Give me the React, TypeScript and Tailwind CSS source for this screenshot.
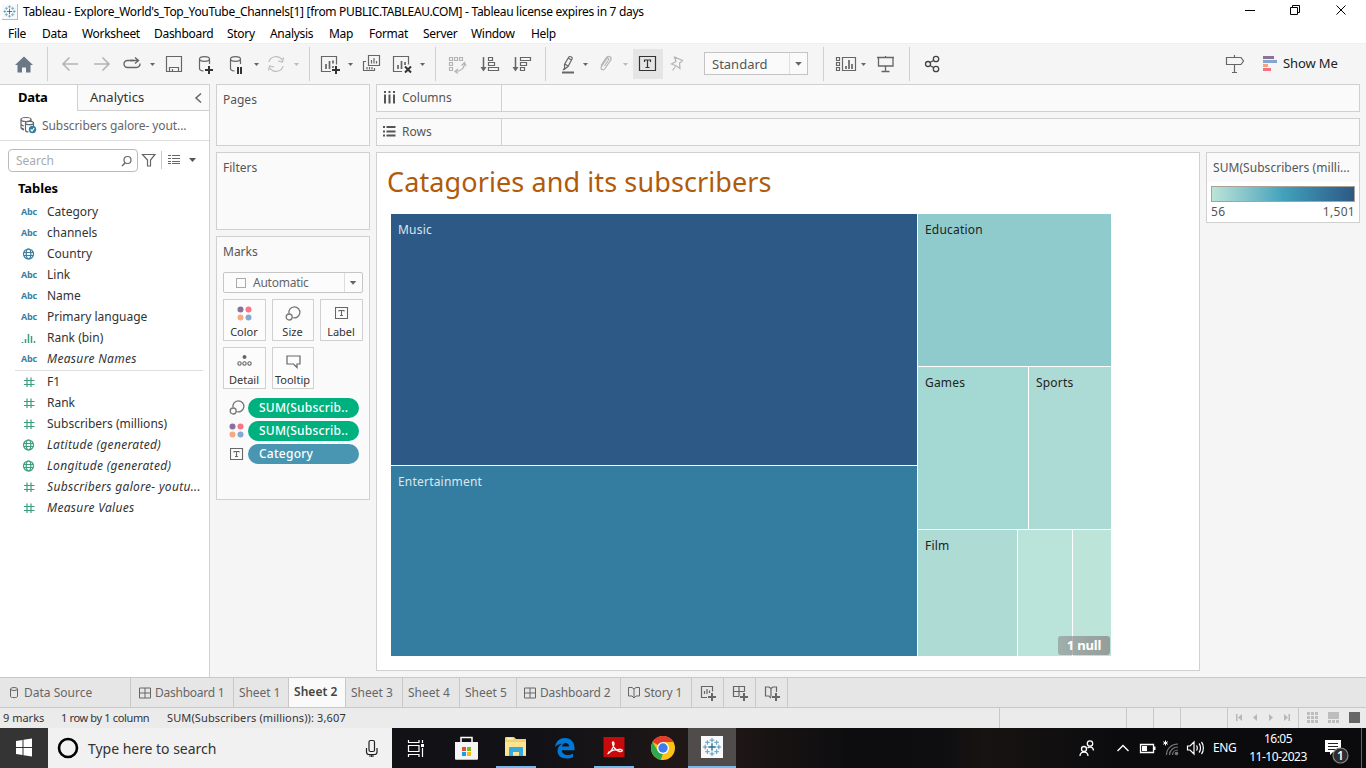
import type { ReactNode } from "react";

const UI = "font-['Noto_Sans','Open_Sans',sans-serif]";

/* Drawing area whose user units are window pixels, starting at (x, y). */
function Glyph({ x, y, w, h, className = "", children }: { x: number; y: number; w: number; h: number; className?: string; children: ReactNode }) {
  return (
    <svg width={w} height={h} viewBox={`${x} ${y} ${w} ${h}`} fill="none" stroke="#666" strokeWidth="1.2" className={`shrink-0 ${className}`}>
      {children}
    </svg>
  );
}

const Caret = ({ x, y = 63, c = "#666" }: { x: number; y?: number; c?: string }) => (
  <path d={`M${x - 2.5} ${y}h5l-2.5 3z`} fill={c} stroke="none" />
);
const Plus = ({ x, y }: { x: number; y: number }) => <path d={`M${x - 4} ${y}h8M${x} ${y - 4}v8`} stroke="#333" strokeWidth="2" />;
const Sep = () => <div className="mb-[3px] mt-[3px] w-px shrink-0 bg-[#d0d0d0]" />;

/* Tableau mark: a large centre cross, and eight smaller ones round it. */
function Mark({ size, className = "" }: { size: number; className?: string }) {
  return (
    <svg width={size} height={size} viewBox="0 0 24 24" fill="none" className={`shrink-0 ${className}`}>
      <rect width="24" height="24" fill="#f7f9fa" />
      <path d="M12 8v8M8 12h8" stroke="#1f6f96" strokeWidth="1.4" />
      <path d="M12 2v5M9.5 4.5h5M12 17v5M9.5 19.500h5M2 12h5M4.500 9.500v5M17 12h5M19.500 9.500v5" stroke="#4b8fae" strokeWidth="1" />
      <path d="M7 4.500v5M4.500 7h5M17 4.500v5M14.500 7h5M7 14.500v5M4.500 17h5M17 14.500v5M14.500 17h5" stroke="#78a8c4" strokeWidth="1.300" />
    </svg>
  );
}

const menu: [string, string][] = [
  ["File", "w-[34px]"], ["Data", "w-10"], ["Worksheet", "w-[72px]"], ["Dashboard", "w-[73px]"], ["Story", "w-[43px]"],
  ["Analysis", "w-[59px]"], ["Map", "w-10"], ["Format", "w-[54px]"], ["Server", "w-12"], ["Window", "w-[60px]"], ["Help", "w-10"],
];

function TitleBar() {
  return (
    <header className="h-[43px] shrink-0 bg-white text-xs text-black">
      <div className="flex h-6 items-center">
        <Mark size={16} className="ml-[2px] border-b border-r border-[#bbb]" />
        <span className="ml-[5px] whitespace-nowrap tracking-[-0.295px]">
          Tableau - Explore_World's_Top_YouTube_Channels[1] [from PUBLIC.TABLEAU.COM] - Tableau license expires in 7 days
        </span>
        <Glyph x={1230} y={0} w={136} h={24} className="ml-auto">
          <g stroke="#000" strokeWidth="1">
            <path d="M1245 10.500h10" />
            <path d="M1290.500 7.500h7v7h-7zM1292.500 7.500v-2h7v7h-2" />
            <path d="M1336.500 5.500l9 9M1345.500 5.500l-9 9" />
          </g>
        </Glyph>
      </div>
      <nav className="flex h-[19px] items-center pl-2">
        {menu.map(([t, w]) => <span key={t} className={`${w} whitespace-nowrap tracking-[-0.3px]`}>{t}</span>)}
      </nav>
    </header>
  );
}

function Toolbar() {
  return (
    <div className="flex h-[41px] shrink-0 border-t border-[#efefef] bg-[#f5f5f5]">
      <Glyph x={0} y={44} w={47} h={40}><path d="M24 56.500l9 8.500h-2.500v7.500h-4.500v-5h-4v5h-4.500v-7.500H15z" fill="#6b7785" stroke="none" /></Glyph>
      <Sep />
      <Glyph x={48} y={44} w={38} h={40}><path d="M78 64H63M69.500 57.500L63 64l6.500 6.500" stroke="#b4b4b4" strokeWidth="1.600" /></Glyph>
      <Glyph x={86} y={44} w={32} h={40}><path d="M94 64h15M102.500 57.500L109 64l-6.500 6.500" stroke="#b4b4b4" strokeWidth="1.600" /></Glyph>
      <Glyph x={118} y={44} w={40} h={40}>
        <path d="M134 60.500h-6.500a3.500 3.500 0 0 0 0 7h9a3.500 3.500 0 0 0 3.500-4" strokeWidth="1.400" /><path d="M130 60.500h8M135 57.500l3.500 3-3.500 3" strokeWidth="1.400" /><Caret x={152.500} />
      </Glyph>
      <Glyph x={158} y={44} w={32} h={40}><path d="M166.500 56.500h15v15h-15zM169.500 71.500v-4h9v4M172.500 71v-2" /></Glyph>
      <Glyph x={190} y={44} w={31} h={40}>
        <ellipse cx="204.500" cy="59" rx="5" ry="2.300" /><path d="M199.500 59v9.500c0 1.500 2 2.300 4 2.500M209.500 59v5" /><Plus x={209} y={70} />
      </Glyph>
      <Glyph x={221} y={44} w={42} h={40}>
        <ellipse cx="235.500" cy="59" rx="5" ry="2.300" /><path d="M230.500 59v9.500c0 1.500 2 2.300 4 2.500M240.500 59v5" /><path d="M238 67v7M241 67v7" stroke="#333" strokeWidth="2" /><Caret x={256.500} />
      </Glyph>
      <Glyph x={263} y={44} w={46} h={40}>
        <g stroke="#bbb"><path d="M269 62a7 6.500 0 0 1 13-2M283 66a7 6.500 0 0 1-13 2" /><path d="M283.500 57.500l-1 4.500-4.500-1M268.500 70.500l1-4.500 4.500 1" /></g><Caret x={296.500} c="#bbb" />
      </Glyph>
      <Sep />
      <Glyph x={310} y={44} w={47} h={40}>
        <path d="M331 71.500h-9.500v-15h15v8" /><path d="M326 64v5M329.500 61v8M333 66v2M333 60.500v3" strokeWidth="1.700" /><Plus x={336} y={70} /><Caret x={350.500} />
      </Glyph>
      <Glyph x={357} y={44} w={30} h={40}>
        <path d="M368.500 55.500h11v10h-11zM366 61.500h-2.500v9h11v-2.500" /><path d="M371.500 60v3.500M374 58v5.500M376.500 61v2.500M367 67v2.500M369.500 67v2.500M372 67v2.500" />
      </Glyph>
      <Glyph x={387} y={44} w={48} h={40}>
        <path d="M402 71.500h-8.500v-15h15v8" /><path d="M398 65v4M401.500 61v8M405 62v3" strokeWidth="1.700" /><path d="M405 66.500l6 6M411 66.500l-6 6" stroke="#333" strokeWidth="2" /><Caret x={422.500} />
      </Glyph>
      <Sep />
      <Glyph x={436} y={44} w={38} h={40}>
        <g stroke="#b4b4b4"><path d="M449.500 57.500h3v3h-3zM454.500 57.500h3v3h-3zM459.500 57.500h3v3h-3zM449.500 62.500h3v3h-3zM449.500 67.500h3v3h-3z" /><path d="M464.500 63c0 5-3 8-9 8.500M461.500 65.500l3-3 1.500 3.500M458 69l-3 2.500 3 2" /></g>
      </Glyph>
      <Glyph x={474} y={44} w={32} h={40}>
        <path d="M483.500 57v11" strokeWidth="1.500" /><path d="M480.500 67h6l-3 4.500z" fill="#666" stroke="none" /><path d="M488.500 57.500h4v3h-4zM488.500 62.500h6v3h-6zM488.500 67.500h10v3h-10z" />
      </Glyph>
      <Glyph x={506} y={44} w={39} h={40}>
        <path d="M515.500 57v11" strokeWidth="1.500" /><path d="M512.500 67h6l-3 4.500z" fill="#666" stroke="none" /><path d="M520.500 57.500h10v3h-10zM520.500 62.500h6v3h-6zM520.500 67.500h4v3h-4z" />
      </Glyph>
      <Sep />
      <Glyph x={546} y={44} w={48} h={40}>
        <path d="M568.500 57.500c1-2 4.500-.5 3.500 1.500l-4 7.500-3.300 2.500-.2-4.500zM564.800 64l3.200 2M568 58l3.500 2M564.500 68.500l-1.500 1.500" /><path d="M562 72.500h12" strokeWidth="2" /><Caret x={585.500} />
      </Glyph>
      <Glyph x={594} y={44} w={39} h={40}>
        <path d="M604.500 66l4-6c1-1.500-1-2.500-2-1l-5 7.500c-1.500 3 1.500 4.500 3.500 2l5.500-8c2-3.500-2-5.500-4-3l-5.500 8" stroke="#b4b4b4" /><Caret x={625.500} c="#bbb" />
      </Glyph>
      <div className="mt-[5px] h-[30px] w-[30px] bg-[#e5e5e5]">
        <Glyph x={633} y={49} w={30} h={30}><g stroke="#333"><path d="M639.500 56.500h16v14h-16z" /><path d="M644.500 62v-2h6v2M647.500 60v7.500M645.500 67.500h4" /></g></Glyph>
      </div>
      <Glyph x={663} y={44} w={41} h={40}><path d="M674.500 57l8 3.500-1.500 1.500-1.500 1 .5 5.500-3.500-2.500-5-2 4.500-2.500zM675.500 66.500l-3 4" stroke="#b4b4b4" /></Glyph>
      <div className="mt-2 flex h-[23px] w-[104px] items-center border border-[#c4c4c4] bg-[#fafafa]">
        <span className="w-[85px] pl-[7px] text-[13px] leading-5 text-[#555]">Standard</span>
        <Glyph x={789} y={53} w={18} h={21} className="border-l border-[#e0e0e0]"><path d="M794.500 62h7l-3.500 4z" fill="#666" stroke="none" /></Glyph>
      </div>
      <div className="w-[15px]" />
      <Sep />
      <Glyph x={824} y={44} w={48} h={40}>
        <path d="M836.500 57.500h3v3h-3zM836.500 62.500h3v3h-3zM836.500 67.500h3v3h-3zM842.500 57.500h13v13h-13z" /><path d="M846 66v3M849 60v9M852 64v5" strokeWidth="1.700" /><Caret x={863.500} />
      </Glyph>
      <Glyph x={872} y={44} w={37} h={40}><path d="M877 57.500h17M878.500 57.500v8.500h14.500v-8.500M885.500 66v5M881.500 71.500h8M885.500 56v1" strokeWidth="1.300" /></Glyph>
      <Sep />
      <Glyph x={910} y={44} w={45} h={40}><g stroke="#444" strokeWidth="1.300"><circle cx="928" cy="64" r="2.500" /><circle cx="936" cy="59" r="2.700" /><circle cx="936" cy="69" r="2.700" /><path d="M930 62.500l3.500-2M930 65.500l3.500 2" /></g></Glyph>
      <div className="flex-1" />
      <Glyph x={1220} y={44} w={30} h={40}><path d="M1226.500 57.500h14.500l2.500 3.500-2.500 3.500h-14.500zM1234.500 55v2.500M1234.500 64.500v7.500M1232 72.500h5" /></Glyph>
      <Glyph x={1250} y={44} w={33} h={40}>
        <g stroke="none"><path d="M1263 56h11v3h-11z" fill="#8a7199" /><path d="M1263 60h14v3h-14z" fill="#82a6cd" /><path d="M1263 64h5v3h-5z" fill="#f5a37f" /><path d="M1263 68h8v3h-8z" fill="#f7707f" /></g>
      </Glyph>
      <span className="w-[83px] self-center whitespace-nowrap text-[13px] text-[#222] tracking-[-0.1px]">Show Me</span>
    </div>
  );
}

const GREEN = "#3ba07a";
const BLUE = "#3a7f9f";

function FieldIcon({ kind, color }: { kind: string; color: string }) {
  if (kind === "abc") return <span className="w-[18px] font-['Open_Sans'] text-[9px] font-bold tracking-[-0.2px] text-[#3a7f9f]">Abc</span>;
  return (
    <svg width="18" height="14" viewBox="0 0 18 14" fill="none" stroke={color} strokeWidth="1.200">
      {kind === "hash" && <path d="M6 2.500v9.500M10 2.500v9.500M3 5.500h10.500M3 9.500h10.500" />}
      {kind === "globe" && <><circle cx="7.500" cy="7" r="5" /><ellipse cx="7.500" cy="7" rx="2.300" ry="5" /><path d="M3 5.500h9M3 8.500h9" strokeWidth="1" /></>}
      {kind === "bin" && <path d="M1.500 11v1M4.500 8v4M7.500 3v9M10.500 5v7M13.500 10v2" strokeWidth="1.500" />}
    </svg>
  );
}

type Field = [string, string, boolean?];
const dimensions: Field[] = [["abc", "Category"], ["abc", "channels"], ["globe", "Country"], ["abc", "Link"], ["abc", "Name"], ["abc", "Primary language"], ["bin", "Rank (bin)"], ["abc", "Measure Names", true]];
const measures: Field[] = [["hash", "F1"], ["hash", "Rank"], ["hash", "Subscribers (millions)"], ["globe", "Latitude (generated)", true], ["globe", "Longitude (generated)", true], ["hash", "Subscribers galore- youtu...", true], ["hash", "Measure Values", true]];

function FieldRow({ f, color }: { f: Field; color: string }) {
  return (
    <li className="flex h-[21px] items-center pl-[21px]">
      <FieldIcon kind={f[0]} color={color} />
      <span className={`ml-2 whitespace-nowrap text-xs text-[#333] ${f[2] ? "italic tracking-[0.32px]" : ""}`}>{f[1]}</span>
    </li>
  );
}

function DataPane() {
  return (
    <aside className="flex w-[210px] shrink-0 flex-col border-r border-t border-[#d0d0d0] bg-white">
      <div className="flex h-[26px] shrink-0 text-[13px]">
        <div className="w-[77px] pl-[18px] leading-[25px] font-bold tracking-[-0.3px] text-black">Data</div>
        <div className="flex flex-1 items-center border-b border-l border-[#d0d0d0] bg-[#fafafa] pl-3 text-[#333]">
          <span className="flex-1">Analytics</span>
          <Glyph x={190} y={85} w={19} h={24}><path d="M201 92.500l-5 4.500 5 4.500" strokeWidth="1.500" /></Glyph>
        </div>
      </div>
      <div className="flex h-[30px] shrink-0 items-center border-b border-[#ddd] pl-[18px]">
        <Glyph x={18} y={111} w={24} h={29}>
          <ellipse cx="26" cy="119.500" rx="5" ry="2" /><path d="M21 119.500v8c0 1.500 1.500 2 3 2.500M31 119.500v1.500M21 124c1 1.500 2 2 3 2M21 127c0 1 2 2 3 2" />
          <ellipse cx="29.500" cy="123" rx="4" ry="1.700" fill="#fff" /><path d="M25.500 123v7c0 1 1 2 3 2M33.500 123v3" />
          <circle cx="32.500" cy="129.500" r="3.700" fill="#317ea3" stroke="none" /><path d="M30.700 129.500l1.300 1.500 2.200-3" stroke="#fff" />
        </Glyph>
        <span className="whitespace-nowrap text-xs text-[#666] tracking-[-0.08px]">Subscribers galore- yout...</span>
      </div>
      <div className="mt-2 flex h-[23px] shrink-0 items-center pl-2">
        <div className="flex h-[23px] w-[130px] items-center rounded-sm border border-[#bbb] pl-[7px]">
          <span className="flex-1 text-xs text-[#aaa]">Search</span>
          <Glyph x={116} y={150} w={20} h={20}><circle cx="126.500" cy="159" r="3.500" /><path d="M124 162l-3 3" strokeWidth="1.500" /></Glyph>
        </div>
        <Glyph x={138} y={149} w={71} h={23}>
          <path d="M142.500 154.500h12.500l-4.500 5.500v6h-3v-6z" /><path d="M161.500 151v18" stroke="#ccc" strokeWidth="1" />
          <path d="M168 155.500h3M172 155.500h8M168 158.500h3M172 158.500h8M168 161.500h3M172 161.500h8M168 163.500h3M172 163.500h8" strokeWidth="1" /><path d="M189 158h7l-3.500 4z" fill="#555" stroke="none" />
        </Glyph>
      </div>
      <h2 className="mt-[3px] h-[26px] shrink-0 pl-[18px] text-[13px] leading-[26px] font-bold tracking-[-0.1px] text-black">Tables</h2>
      <ul>{dimensions.map((f) => <FieldRow key={f[1]} f={f} color={f[0] === "bin" ? GREEN : BLUE} />)}</ul>
      <div className="ml-[15px] mr-[6px] mt-px h-px shrink-0 bg-[#ddd]" />
      <ul>{measures.map((f) => <FieldRow key={f[1]} f={f} color={GREEN} />)}</ul>
    </aside>
  );
}

const Dots = () => (
  <svg width="15" height="15" viewBox="0 0 15 15"><circle cx="3.500" cy="3.500" r="3" fill="#8a7199" /><circle cx="11.500" cy="3.500" r="3" fill="#fb7585" /><circle cx="3.500" cy="11.500" r="3" fill="#f5ab80" /><circle cx="11.500" cy="11.500" r="3" fill="#86a8d2" /></svg>
);
const SizeIcon = () => (
  <svg width="16" height="15" viewBox="0 0 16 15" fill="none" stroke="#777" strokeWidth="1.300"><path d="M4 7.500A5.500 5.500 0 1 1 7.500 11.500" /><circle cx="4.200" cy="11" r="3" /></svg>
);
const TextIcon = () => (
  <svg width="14" height="12" viewBox="0 0 14 12" fill="none" stroke="#666" strokeWidth="1.100"><path d="M.5.500h12v11H.5z" /><path d="M4 4.500v-1h5v1M6.500 3.500v5M5 8.500h3" /></svg>
);
const DetailIcon = () => (
  <svg width="15" height="15" viewBox="0 0 15 15" fill="none" stroke="#666" strokeWidth="1.100"><circle cx="7.500" cy="3" r="2" fill="#666" stroke="none" /><circle cx="2.500" cy="9.500" r="1.700" /><circle cx="7.500" cy="9.500" r="1.700" /><circle cx="12.500" cy="9.500" r="1.700" /></svg>
);
const TipIcon = () => (
  <svg width="15" height="15" viewBox="0 0 15 15" fill="none" stroke="#666" strokeWidth="1.200"><path d="M1 2h13v8h-3v3.500l-3.500-3.500H1z" /></svg>
);

function MarkButton({ label, icon, w }: { label: string; icon: ReactNode; w: string }) {
  return (
    <div className={`flex h-[42px] flex-col items-center border border-[#d0d0d0] bg-[#fcfcfc] pt-[5px] ${w}`}>
      <div className="flex h-4 items-center">{icon}</div>
      <span className="mt-[3px] whitespace-nowrap pr-px text-[11px] leading-4 text-[#333]">{label}</span>
    </div>
  );
}

function Pill({ icon, label, color }: { icon: ReactNode; label: string; color: string }) {
  return (
    <div className="flex h-[23px] items-center">
      <div className="flex w-[23px] justify-center">{icon}</div>
      <div className={`h-5 w-[111px] rounded-full pl-[11px] text-xs leading-5 font-medium tracking-[0.25px] text-white whitespace-nowrap ${color}`}>{label}</div>
    </div>
  );
}

function Cards() {
  const box = "border border-[#d0d0d0] bg-[#fafafa] px-[6px] text-xs text-[#555]";
  return (
    <section className="ml-[6px] flex w-[154px] shrink-0 flex-col gap-[6px]">
      <div className={`h-[62px] pt-[7px] leading-4 ${box}`}>Pages</div>
      <div className={`h-[78px] pt-[7px] leading-4 ${box}`}>Filters</div>
      <div className={`h-[264px] pt-[7px] leading-4 ${box}`}>
        Marks
        <div className="mt-3 flex h-[21px] w-[140px] items-center rounded-[2px] border border-[#c6c6c6] bg-[#fcfcfc] pl-3">
          <div className="h-[10px] w-[10px] border border-[#aaa]" />
          <span className="ml-[7px] flex-1 text-xs tracking-[-0.25px] text-[#666]">Automatic</span>
          <Glyph x={344} y={273} w={18} h={19} className="border-l border-[#ddd]"><path d="M350 281h7l-3.500 4z" fill="#666" stroke="none" transform="translate(-1 0)" /></Glyph>
        </div>
        <div className="mt-[6px] flex gap-[6px]">
          <MarkButton label="Color" icon={<Dots />} w="w-[43px]" /><MarkButton label="Size" icon={<SizeIcon />} w="w-[42px]" /><MarkButton label="Label" icon={<TextIcon />} w="w-[43px]" />
        </div>
        <div className="mt-[6px] flex gap-[6px]">
          <MarkButton label="Detail" icon={<DetailIcon />} w="w-[43px]" /><MarkButton label="Tooltip" icon={<TipIcon />} w="w-[42px]" />
        </div>
        <div className="ml-[2px] mt-[7px]">
          <Pill icon={<SizeIcon />} label="SUM(Subscrib.." color="bg-[#00b180]" />
          <Pill icon={<Dots />} label="SUM(Subscrib.." color="bg-[#00b180]" />
          <Pill icon={<TextIcon />} label="Category" color="bg-[#4996b2]" />
        </div>
      </div>
    </section>
  );
}

function Shelf({ label, children }: { label: string; children: ReactNode }) {
  return (
    <div className="flex h-7 shrink-0 border border-[#d0d0d0] bg-[#fafafa]">
      <div className="flex w-[125px] items-center border-r border-[#d0d0d0] text-xs text-[#555]">{children}<span>{label}</span></div>
    </div>
  );
}

const cell = "pl-[7px] pt-[7px] text-xs leading-[18px] tracking-[0.2px]";

function Viz() {
  return (
    <div className="w-[824px] border border-[#d0d0d0] bg-white">
      <h1 className="h-[61px] whitespace-nowrap pl-[10px] pt-[9px] font-['Noto_Sans'] text-[27px] leading-10 tracking-[0.1px] text-[#b15a0b]">Catagories and its subscribers</h1>
      <div className="relative ml-[14px] flex h-[442px] w-[720px] gap-px text-[#222]">
        <div className="flex w-[526px] flex-col gap-px text-[#dce6ee]">
          <div className={`h-[251px] bg-[#2c5985] ${cell}`}>Music</div>
          <div className={`h-[190px] bg-[#347da0] ${cell}`}>Entertainment</div>
        </div>
        <div className="flex w-[193px] flex-col gap-px">
          <div className={`h-[152px] bg-[#8fcbcd] ${cell}`}>Education</div>
          <div className="flex h-[162px] gap-px">
            <div className={`w-[110px] bg-[#a4d8d3] ${cell}`}>Games</div>
            <div className={`w-[82px] bg-[#acdbd5] ${cell}`}>Sports</div>
          </div>
          <div className="flex h-[126px] gap-px">
            <div className={`w-[99px] bg-[#afdbd5] ${cell}`}>Film</div>
            <div className="w-[54px] bg-[#bae4d9]" />
            <div className="w-[38px] bg-[#bce4d8]" />
          </div>
        </div>
        <div className="absolute bottom-px right-px h-[19px] w-[52px] rounded-[3px] bg-linear-to-r from-[#8c8c8c]/60 to-[#8c8c8c]/80 text-center text-[13px] leading-[19px] font-bold tracking-[-0.15px] text-white">1 null</div>
      </div>
    </div>
  );
}

function Legend() {
  return (
    <div className="ml-[6px] h-[71px] w-[154px] border border-[#d0d0d0] bg-white text-xs text-[#555]">
      <div className="h-[29px] whitespace-nowrap bg-[#fafafa] pl-[6px] leading-[30px] tracking-[0.05px]">SUM(Subscribers (milli...</div>
      <div className="mx-1 mt-1 h-4 border border-[#aaa297] bg-linear-to-r from-[#bce4d8] via-[#41a2bc] to-[#2c5985]" />
      <div className="flex justify-between px-1 leading-5 tracking-[0.3px]"><span>56</span><span>1,501</span></div>
    </div>
  );
}

const GridIcon = () => <svg width="12" height="12" viewBox="0 0 12 12" fill="none" stroke="#666" className="mr-1"><path d="M.5 1h11v10H.5zM6 1v10M.5 6h11" /></svg>;
const BookIcon = () => <svg width="12" height="13" viewBox="0 0 12 13" fill="none" stroke="#666" className="mr-1"><path d="M6 3L4 1.500H.5V10H4l2 2 2-2h3.500V1.500H8zM6 3v9" /></svg>;

function Tab({ w, label, icon, active }: { w: string; label?: string; icon?: ReactNode; active?: boolean }) {
  return (
    <div className={`flex shrink-0 items-center whitespace-nowrap border-r border-[#c8c8c8] ${w} ${active ? "bg-[#fafafa] pb-[2px] font-semibold tracking-[0.05px] text-[#444]" : ""}`}>{icon}{label}</div>
  );
}

function SheetTabs() {
  return (
    <div className="flex h-[31px] shrink-0 border-y border-[#c8c8c8] bg-[#e6e6e6] text-xs text-[#666]">
      <Tab w="w-[131px] pl-[6px]" label="Data Source" icon={<svg width="18" height="13" viewBox="0 0 18 13" fill="none" stroke="#666"><ellipse cx="8" cy="3" rx="3.500" ry="1.500" /><path d="M4.500 3v7.500c0 1.500 7 1.500 7 0V3" /></svg>} />
      <Tab w="w-[103px] pl-2 tracking-[-0.25px]" label="Dashboard 1" icon={<GridIcon />} />
      <Tab w="w-[55px] pl-[5px] tracking-[-0.1px]" label="Sheet 1" />
      <Tab w="w-[57px] pl-[5px]" label="Sheet 2" active />
      <Tab w="w-[57px] pl-[5px]" label="Sheet 3" />
      <Tab w="w-[57px] pl-[5px]" label="Sheet 4" />
      <Tab w="w-[57px] pl-[5px]" label="Sheet 5" />
      <Tab w="w-[104px] pl-[7px] tracking-[-0.15px]" label="Dashboard 2" icon={<GridIcon />} />
      <Tab w="w-[71px] pl-[7px] tracking-[-0.15px]" label="Story 1" icon={<BookIcon />} />
      <Tab w="w-8 pl-[6px]" icon={<Glyph x={698} y={682} w={20} h={22}><path d="M707 697.500h-5.500v-11h11v5" /><path d="M704.500 691v3M707 689v5M709.500 690.500v2.500" /><path d="M708 697h8M712 693v8" strokeWidth="2" /></Glyph>} />
      <Tab w="w-8 pl-[6px]" icon={<Glyph x={730} y={682} w={20} h={22}><path d="M739 696.500h-5.500v-10h11v5M739 686.500v10M733.500 691.500h11" /><path d="M740 697h8M744 693v8" strokeWidth="2" /></Glyph>} />
      <Tab w="w-8 pl-[6px]" icon={<Glyph x={762} y={682} w={20} h={22}><path d="M771 698l-2-2h-3.500v-9h3.500l2 1.500 2-1.500h3.500v5M771 688.500v8" /><path d="M772 697h8M776 693v8" strokeWidth="2" /></Glyph>} />
    </div>
  );
}

function StatusBar() {
  const line = "border-l border-[#c8c8c8]";
  return (
    <div className="flex h-5 shrink-0 bg-[#ebebeb] text-[11px] leading-5 text-[#333]">
      <span className="w-[61px] whitespace-nowrap pl-[3px]">9 marks</span>
      <span className="w-[106px] whitespace-nowrap tracking-[-0.35px]">1 row by 1 column</span>
      <span className="w-[832px] whitespace-nowrap tracking-[0.12px]">SUM(Subscribers (millions)): 3,607</span>
      <div className={`w-[127px] ${line}`} /><div className={`w-[27px] ${line}`} /><div className={`w-[27px] ${line}`} /><div className={`w-[47px] ${line}`} />
      <div className={`w-[71px] ${line}`}>
        <Glyph x={1228} y={708} w={70} h={20}><g fill="#b8b8b8" stroke="none"><path d="M1236 714h1.500v7h-1.500zM1242 714v7l-4-3.500zM1257 714v7l-4-3.500zM1269 714v7l4-3.500zM1284 714v7l4-3.500zM1288.500 714h1.500v7h-1.500z" /></g></Glyph>
      </div>
      <div className={`w-[68px] ${line}`}>
        <Glyph x={1299} y={708} w={67} h={20}>
          <g fill="#bdbdbd" stroke="none">
            {[1307, 1311, 1315].map((x) => [712, 716, 720].map((y) => <rect key={`${x}-${y}`} x={x} y={y} width="3" height="3" />))}
            <path d="M1328 712h11v7h-11zM1328 720h3v3h-3zM1332 720h3v3h-3zM1336 720h3v3h-3z" /><rect x="1349" y="712" width="11" height="11" fill="#666" />
          </g>
        </Glyph>
      </div>
    </div>
  );
}

function TaskBar() {
  const slot = "flex h-10 items-center justify-center border-b-2";
  return (
    <footer className="flex h-10 shrink-0 bg-[linear-gradient(90deg,#121216_0%,#121216_40%,#211816_52%,#0d0d0f_62%,#0e0e10_69%,#171311_72%,#0b0b0e_82%,#0b0b0e_100%)] text-white">
      <div className="w-12 bg-[#343434]"><Glyph x={0} y={728} w={48} h={40}><path d="M16 741l6.500-1v7H16zM23.500 739.800l8.500-1.300v8.500h-8.500zM16 748h6.500v7l-6.500-1zM23.500 748H32v8.500l-8.500-1.300z" fill="#fff" stroke="none" /></Glyph></div>
      <div className="flex w-[344px] items-center bg-[#f1f1f1]">
        <Glyph x={48} y={728} w={40} h={40}><circle cx="68" cy="748" r="9" stroke="#000" strokeWidth="2.600" /></Glyph>
        <span className="flex-1 whitespace-nowrap pt-px text-sm tracking-[-0.03px] text-[#333]">Type here to search</span>
        <Glyph x={352} y={728} w={40} h={40}><g stroke="#222" strokeWidth="1.200"><rect x="369" y="740.500" width="5.500" height="11" rx="1.500" /><path d="M366.500 748v4c0 1.500 1 2.500 2.500 2.500h5.500c1.500 0 2.500-1 2.500-2.500v-4M371.700 754.500v2.500M369 756h5" /></g></Glyph>
      </div>
      <Glyph x={392} y={728} w={48} h={40}><path d="M408.500 740v2.500h10.500V740M408.500 757v-2.500h10.500v2.500M408.500 745.500h10.500v6h-10.500zM422.500 740v3M422.500 748v9" stroke="#fff" /><path d="M421 744h3v3h-3z" fill="#fff" stroke="none" /></Glyph>
      <Glyph x={440} y={728} w={56} h={40}>
        <path d="M461 744v-6.500h11v6.500" stroke="#fff" strokeWidth="1.500" /><path d="M455 742h23v17a1 1 0 0 1-1 .7h-21a1 1 0 0 1-1-.7z" fill="#f5f5f5" stroke="none" />
        <g stroke="none"><path d="M462 747h4v4h-4z" fill="#e94f28" /><path d="M467 747h4v4h-4z" fill="#80b918" /><path d="M462 752h4v4h-4z" fill="#12a1e8" /><path d="M467 752h4v4h-4z" fill="#fdb813" /></g>
      </Glyph>
      <div className={`w-10 border-[#76b9ed] ${slot}`}>
        <svg width="24" height="22" viewBox="0 0 24 22"><path d="M1 2a1 1 0 0 1 1-1h8l2 2h10v17H1z" fill="#f4d072" /><path d="M1 6h21v13H1z" fill="#fde493" /><path d="M3 2h6v1.500H3z" fill="#fff2bb" /><path d="M5 12a1 1 0 0 1 1-1h12a1 1 0 0 1 1 1v8h-4v-4H9v4H5z" fill="#36a9df" /></svg>
      </div>
      <div className={`w-[58px] border-transparent ${slot}`}>
        <svg width="22" height="22" viewBox="0 0 22 22" className="translate-y-px"><path d="M1 10C2 4 6 1 11 1c6 0 9.500 4.500 9.500 10v2.300H7.800c.2 3.300 3 4.700 5.700 4.700 2 0 4-.6 5.500-1.600V20c-2 1-4 1.500-6.500 1.500C7 21.500 3.500 18.500 3.500 14c0-3.500 2-6 4.500-7.200-2.800.2-5.300 1.200-7 3.200zM8 9.500h7c0-2.200-1.200-3.500-3.300-3.500C9.700 6 8.300 7.500 8 9.500z" fill="#0078d7" /></svg>
      </div>
      <div className={`w-10 border-[#76b9ed] ${slot}`}>
        <svg width="22" height="21" viewBox="0 0 22 21" fill="none"><rect x=".5" width="21" height="20" fill="#c80a0a" /><path d="M4.500 17c3-1.500 6-6 6.500-10 .2-2.500-1.800-3-1.500-.5.500 4 4 7.500 7.500 8 3 .3 3-1.800.5-2-4-.2-9 1-12.500 3" stroke="#fff" strokeWidth="1.300" /></svg>
      </div>
      <div className={`w-[54px] border-transparent ${slot}`}>
        <svg width="24" height="24" viewBox="0 0 24 24" className="translate-x-[2px] translate-y-px"><circle cx="12" cy="12" r="12" fill="#fbc116" /><path d="M12 12L1.600 6A12 12 0 0 1 22.400 6H12z" fill="#e33b2e" /><path d="M1.600 6l5.200 9 5.200 3-2 5.800A12 12 0 0 1 1.600 6z" fill="#2da94f" /><path d="M12 18l5.200-3L12 24a12 12 0 0 1-2-.2z" fill="#fbc116" /><circle cx="12" cy="12" r="6" fill="#fff" /><circle cx="12" cy="12" r="4.700" fill="#3b7ded" /></svg>
      </div>
      <div className={`w-12 border-[#76b9ed] bg-[#504c4c] ${slot}`}><Mark size={22} /></div>
      <div className="flex-1" />
      <Glyph x={1070} y={728} w={140} h={40}>
        <g stroke="#fff">
          <circle cx="1090" cy="743.500" r="2.700" strokeWidth="1.300" /><circle cx="1084" cy="749" r="2.500" strokeWidth="1.300" /><path d="M1080 756c0-2.500 2-4 4-4s4 1.500 4 4M1087.500 748c1-1 5.500-2 6 2.500" strokeWidth="1.300" />
          <path d="M1117.500 751l5.500-5.500 5.500 5.500" strokeWidth="1.400" />
          <path d="M1140.500 744.500h13v8h-13z" strokeWidth="1.300" /><path d="M1142 746h5v5h-5zM1154 746.500h1.500v3.500h-1.500z" fill="#fff" stroke="none" />
          <path d="M1165.500 740.500v5M1163.200 741.700l4.600 2.600M1167.800 741.700l-4.600 2.600" strokeWidth="1" />
          <g stroke="#777"><path d="M1166.500 755c0-6.500 5-11 11.500-11M1169.500 755c0-4.500 4-8 8.500-8M1172.500 755c0-3 2.500-5 5.500-5" /><circle cx="1176.500" cy="753.500" r="1.200" fill="#777" /></g>
          <path d="M1187.500 746h2.500l4-4v12l-4-4h-2.500zM1196.500 745.500c1 1 1 4 0 5M1199 743.500c2 2 2 7 0 9M1201.500 742c2.500 3 2.500 9 0 12" strokeWidth="1.200" />
        </g>
      </Glyph>
      <span className="w-[38px] self-center pl-[3px] text-xs tracking-[-0.4px]">ENG</span>
      <div className="w-[60px] whitespace-nowrap pt-[2px] text-center text-xs leading-[18px] tracking-[-0.5px]"><div>16:05</div><div>11-10-2023</div></div>
      <Glyph x={1308} y={728} w={58} h={40}>
        <path d="M1325 740h16v12h-8l-3 3v-3h-5z" fill="#fff" stroke="none" /><path d="M1328 743.500h10M1328 746.500h10M1328 749.500h10" stroke="#222" strokeWidth="1" />
        <circle cx="1340.500" cy="755.500" r="7.500" fill="#2d2d2d" stroke="#888" /><text x="1340.500" y="760" textAnchor="middle" fill="#fff" stroke="none" fontSize="12" fontWeight="600">1</text><path d="M1361.500 728v40" stroke="#666" strokeWidth="1" />
      </Glyph>
    </footer>
  );
}

export default function App() {
  return (
    <div className={`flex h-[768px] w-[1366px] flex-col overflow-hidden bg-[#f5f5f5] ${UI}`}>
      <TitleBar />
      <Toolbar />
      <main className="flex h-[593px] shrink-0">
        <DataPane />
        <Cards />
        <div className="ml-[6px] flex w-[984px] flex-col">
          <Shelf label="Columns"><Glyph x={377} y={85} w={25} h={26}><path d="M385 91v2M385 94.500v9M389.500 91v2M389.500 94.500v9M394 91v2M394 94.500v9" strokeWidth="2" stroke="#555" /></Glyph></Shelf>
          <div className="h-[6px] shrink-0" />
          <Shelf label="Rows"><Glyph x={377} y={119} w={25} h={26}><path d="M383 127h2M386.500 127h9M383 131.500h2M386.500 131.500h9M383 135.500h2M386.500 135.500h9" strokeWidth="2" stroke="#555" /></Glyph></Shelf>
          <div className="mt-[6px] flex h-[519px] items-start"><div className="flex h-full"><Viz /></div><Legend /></div>
        </div>
      </main>
      <SheetTabs />
      <StatusBar />
      <TaskBar />
    </div>
  );
}
